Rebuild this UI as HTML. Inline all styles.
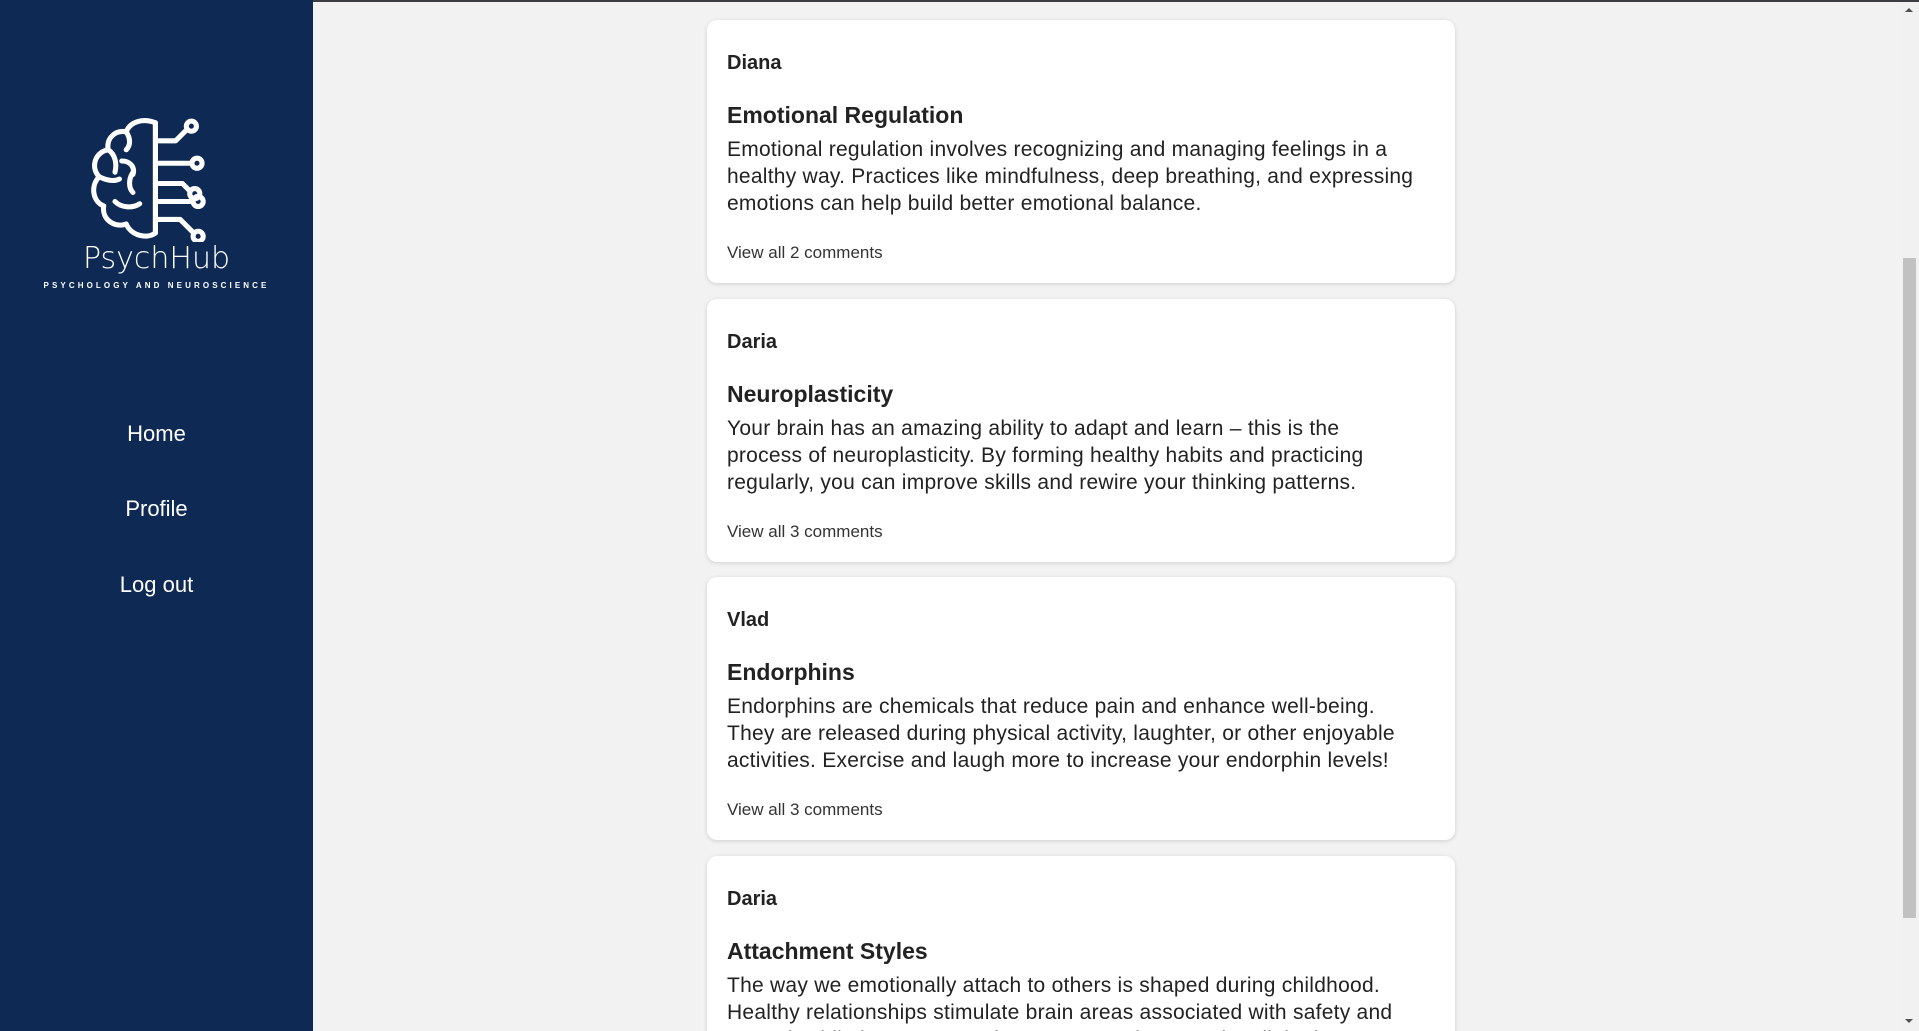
<!DOCTYPE html>
<html><head><meta charset="utf-8"><style>
*{margin:0;padding:0;box-sizing:border-box}
html,body{width:1919px;height:1031px;overflow:hidden;background:#f2f2f2;font-family:"Liberation Sans",Arial,sans-serif}
#wrap{position:relative;width:1919px;height:1031px;overflow:hidden}
.top{position:absolute;left:0;top:0;width:1919px;height:2px;background:#3a3d42}
.side{position:absolute;left:0;top:0;width:313px;height:1031px;background:#0e2a54}
.logo{position:absolute;left:88px;top:116px}
.brand{position:absolute;left:0;width:313px;top:241px;text-align:center;color:#fff;font-size:30px;font-family:"DejaVu Sans",sans-serif;font-weight:300}
.sub{position:absolute;left:0;width:313px;top:281px;text-align:center;color:#fff;font-size:8px;font-weight:bold;letter-spacing:3.1px}
.nav{position:absolute;left:0;width:313px;text-align:center;color:#fff;font-size:22px}
.card{position:absolute;left:707px;width:748px;height:263px;background:#fff;border-radius:10px;box-shadow:0 1px 4px rgba(0,0,0,.15);color:#222}
.n{position:absolute;left:20px;top:32px;font-size:20px;font-weight:bold}
.t{position:absolute;left:20px;top:82px;font-size:23px;font-weight:bold}
.b{position:absolute;left:20px;top:116px;font-size:21px;line-height:27px;white-space:nowrap;letter-spacing:0.25px}
.v{position:absolute;left:20px;top:223px;font-size:17px;color:#333}
.sb{position:absolute;left:1900px;top:2px;width:19px;height:1029px;background:#f1f1f1}
.th{position:absolute;left:1903px;top:258px;width:13px;height:660px;background:#c1c1c1}
</style></head><body><div id="wrap">
<div class="top"></div>
<div class="side">
<svg class="logo" width="118" height="126" viewBox="0 0 105 112" fill="none" stroke="#fff" stroke-width="4.5" stroke-linecap="round" stroke-linejoin="round">
<path d="M60 6 C50 2 38 4 34 14 C24 12 16 20 18 30 C6 32 2 46 10 54 C2 62 4 76 14 80 C12 92 24 100 34 96 C38 106 52 110 60 104 Z"/>
<path d="M60 6 V104"/>
<path d="M34 14 C38 20 38 26 34 30"/>
<path d="M18 30 C24 34 26 42 24 50"/>
<path d="M10 54 C18 58 24 58 28 56"/>
<path d="M30 40 C38 40 42 46 40 52 M40 50 C36 56 36 64 40 68"/>
<path d="M24 76 C30 82 40 82 46 78"/>
<path d="M60 22 H78 L88 12"/><circle cx="92" cy="9" r="4.5"/>
<path d="M60 42 H92"/><circle cx="97" cy="42" r="4.5"/>
<path d="M60 60 H84 L90 66"/><circle cx="95" cy="69" r="4.5"/>
<path d="M60 76 H93"/><circle cx="98" cy="76" r="4.5"/>
<path d="M60 92 H82 L94 104"/><circle cx="98" cy="107" r="4.5"/>
</svg>
<div class="brand">PsychHub</div>
<div class="sub">PSYCHOLOGY AND NEUROSCIENCE</div>
<div class="nav" style="top:421px">Home</div>
<div class="nav" style="top:496px">Profile</div>
<div class="nav" style="top:572px">Log out</div>
</div>

<div class="card" style="top:20px"><div class="n">Diana</div><div class="t">Emotional Regulation</div><div class="b">Emotional regulation involves recognizing and managing feelings in a<br>healthy way. Practices like mindfulness, deep breathing, and expressing<br>emotions can help build better emotional balance.</div><div class="v">View all 2 comments</div></div>
<div class="card" style="top:299px"><div class="n">Daria</div><div class="t">Neuroplasticity</div><div class="b">Your brain has an amazing ability to adapt and learn – this is the<br>process of neuroplasticity. By forming healthy habits and practicing<br>regularly, you can improve skills and rewire your thinking patterns.</div><div class="v">View all 3 comments</div></div>
<div class="card" style="top:577px"><div class="n">Vlad</div><div class="t">Endorphins</div><div class="b">Endorphins are chemicals that reduce pain and enhance well-being.<br>They are released during physical activity, laughter, or other enjoyable<br>activities. Exercise and laugh more to increase your endorphin levels!</div><div class="v">View all 3 comments</div></div>
<div class="card" style="top:856px"><div class="n">Daria</div><div class="t">Attachment Styles</div><div class="b">The way we emotionally attach to others is shaped during childhood.<br>Healthy relationships stimulate brain areas associated with safety and<br>reward, while insecure attachment may activate anxiety-linked areas.</div></div>

<div class="sb"></div><div class="th"></div>
<svg style="position:absolute;left:1904px;top:6px" width="10" height="8"><path d="M1 6 L5 2 L9 6Z" fill="#505050"/></svg>
<svg style="position:absolute;left:1904px;top:1017px" width="10" height="8"><path d="M1 2 L5 6 L9 2Z" fill="#505050"/></svg>
</div></body></html>
